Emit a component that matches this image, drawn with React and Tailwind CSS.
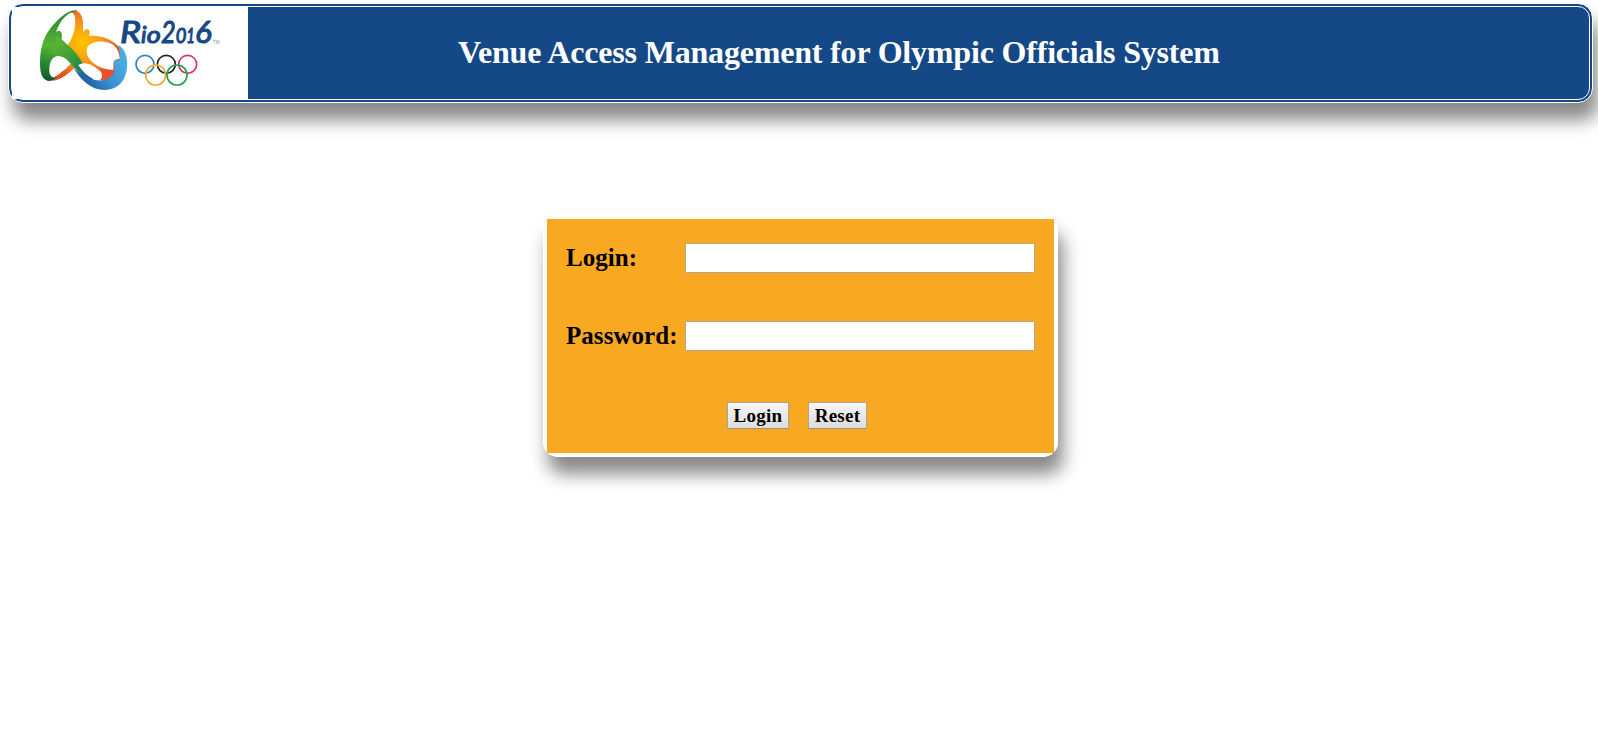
function Logo() {
  return (
    <svg viewBox="-54 21 708 276" className="block h-[92px] w-[236px] shrink-0 bg-white" role="img" aria-label="Rio 2016">
      <defs>
        <linearGradient id="green" gradientUnits="userSpaceOnUse" x1="90" y1="40" x2="60" y2="240">
          <stop offset="0" stopColor="#2c8a34" />
          <stop offset="0.25" stopColor="#3f9f35" />
          <stop offset="0.5" stopColor="#56b333" />
          <stop offset="0.75" stopColor="#2a8b35" />
          <stop offset="1" stopColor="#0b5a2c" />
        </linearGradient>
        <radialGradient id="orange" gradientUnits="userSpaceOnUse" cx="158" cy="128" r="112">
          <stop offset="0" stopColor="#fdc400" />
          <stop offset="0.4" stopColor="#f9a50f" />
          <stop offset="0.8" stopColor="#ee7522" />
          <stop offset="1" stopColor="#e04a25" />
        </radialGradient>
        <linearGradient id="blue" gradientUnits="userSpaceOnUse" x1="275" y1="180" x2="165" y2="250">
          <stop offset="0" stopColor="#46aee3" />
          <stop offset="0.5" stopColor="#3b8fd0" />
          <stop offset="1" stopColor="#1f5ea8" />
        </linearGradient>
        <linearGradient id="sweep" gradientUnits="userSpaceOnUse" x1="80" y1="130" x2="165" y2="235">
          <stop offset="0" stopColor="#56b333" />
          <stop offset="0.55" stopColor="#35983a" />
          <stop offset="0.8" stopColor="#187e65" />
          <stop offset="1" stopColor="#1f5ea8" />
        </linearGradient>
      </defs>
      <path d="M122 36C136 27 151 35 156 52C161 67 158 82 160 98C162 90 167 86 173 88C181 91 180 99 177 108C207 105 247 115 270 145C284 162 286 190 270 216C258 239 229 245 207 240C180 233 165 214 146 191C128 209 103 235 76 241L66 236C91 223 113 202 123 190L95 160C120 130 136 100 136 66C136 48 133 40 122 36Z" fill="url(#orange)" />
      <path d="M66 236Q84 228 99 213L108 218Q88 238 68 243Z" fill="#df5129" />
      <path d="M207 211Q229 216 251 209L240 233Q218 245 200 237Z" fill="#e7502a" />
      <path d="M143 31C112 25 68 70 48 105C32 136 28 171 31 208C33 230 45 245 60 243C68 242 74 238 80 232C67 236 57 226 58 210C58 188 65 170 84 168C102 167 111 180 125 193L144 170C127 151 111 134 94 119C98 108 96 91 86 92C79 93 77 99 76 105C84 73 104 43 127 37C133 35 138 34 143 31Z" fill="url(#green)" />
      <path d="M80 106C104 127 134 149 153 181C162 197 173 223 191 239C180 246 154 226 137 207C119 187 108 168 84 168L62 160Z" fill="url(#sweep)" />
      <path d="M252 182C258 177 264 178 270 181C269 169 270 153 265 134C290 149 295 184 290 211C284 249 257 271 224 270C181 269 153 240 128 200C150 223 176 238 201 241C233 244 256 227 253 201Z" fill="url(#blue)" />
      <path d="M172 141C184 125 211 121 231 127C257 134 268 151 269 177C262 176 253 178 251 185C249 193 252 202 250 209C226 211 181 195 172 165Q168 151 172 141Z" fill="white" />
      <path d="M145 195C169 180 192 198 213 215C218 224 217 237 209 240C183 240 161 220 145 195Z" fill="white" />
      <text y="128" fill="#184884" stroke="#184884" strokeWidth="3.5" strokeLinejoin="round" fontFamily="Lato, sans-serif" fontStyle="italic">
        <tspan x="270" fontSize="94" textLength="63" lengthAdjust="spacingAndGlyphs">R</tspan>
        <tspan x="333" fontSize="72">i</tspan>
        <tspan x="350" fontSize="72" textLength="42" lengthAdjust="spacingAndGlyphs">o</tspan>
        <tspan x="393" fontSize="94" textLength="44" lengthAdjust="spacingAndGlyphs">2</tspan>
        <tspan x="437" fontSize="62" textLength="32" lengthAdjust="spacingAndGlyphs">0</tspan>
        <tspan x="469" fontSize="62" textLength="26" lengthAdjust="spacingAndGlyphs">1</tspan>
        <tspan x="495" fontSize="92" textLength="50" lengthAdjust="spacingAndGlyphs">6</tspan>
      </text>
      <text x="548" y="131" fill="#8492a7" fontFamily="Liberation Sans, sans-serif" fontSize="14" textLength="21">TM</text>
      <g fill="none" strokeWidth="5">
        <circle cx="345" cy="193" r="27" stroke="#2785c7" />
        <circle cx="409" cy="193" r="27" stroke="#222" />
        <circle cx="473" cy="193" r="27" stroke="#dc345d" />
        <circle cx="377" cy="225" r="30" stroke="#efaa31" />
        <circle cx="441" cy="225" r="30" stroke="#20a153" />
      </g>
    </svg>
  );
}

function Field({ label, type, id }) {
  return (
    <div className="flex h-[30px] items-center">
      <label htmlFor={id} className="w-[119px] text-[25px] leading-[30px] font-bold tracking-[0.05px]">{label}</label>
      <input id={id} type={type} className="h-[30px] w-[350px] border border-[#b8a98a] bg-white px-1 outline-none" />
    </div>
  );
}

function Button({ children, className, type }) {
  return (
    <button type={type} className={`h-[27px] border border-[#aaa39a] border-b-[#96928a] bg-linear-to-b from-[#f6f6f6] to-[#dddddd] text-center text-[19px] leading-[24px] font-bold tracking-[0.25px] ${className}`}>
      {children}
    </button>
  );
}

export default function App() {
  return (
    <div className="h-[739px] overflow-hidden bg-white pt-[3px] pl-2 font-['Liberation_Serif',serif] text-black">
      <header className="flex h-[100px] w-[1585px] rounded-[15px] border-4 border-double border-white bg-[#154886] shadow-[5px_17px_18px_#888]">
        <Logo />
        <h1 className="mt-[27px] ml-[210px] text-[32px] leading-[37px] font-bold tracking-[-0.185px] whitespace-nowrap text-white">
          Venue Access Management for Olympic Officials System
        </h1>
      </header>
      <main className="mt-[112px] ml-[535px] w-[515px] rounded-[15px] border-4 border-white shadow-[5px_17px_18px_#888]">
        <form className="flex h-[234px] flex-col bg-[#f9a921] pt-6 pl-[19px]" onSubmit={(e) => e.preventDefault()}>
          <Field id="login" label="Login:" type="text" />
          <div className="mt-12">
            <Field id="password" label="Password:" type="password" />
          </div>
          <div className="mt-[51px] ml-[161px] flex gap-[19px]">
            <Button type="submit" className="w-[62px]">Login</Button>
            <Button type="reset" className="w-[59px]">Reset</Button>
          </div>
        </form>
      </main>
    </div>
  );
}
